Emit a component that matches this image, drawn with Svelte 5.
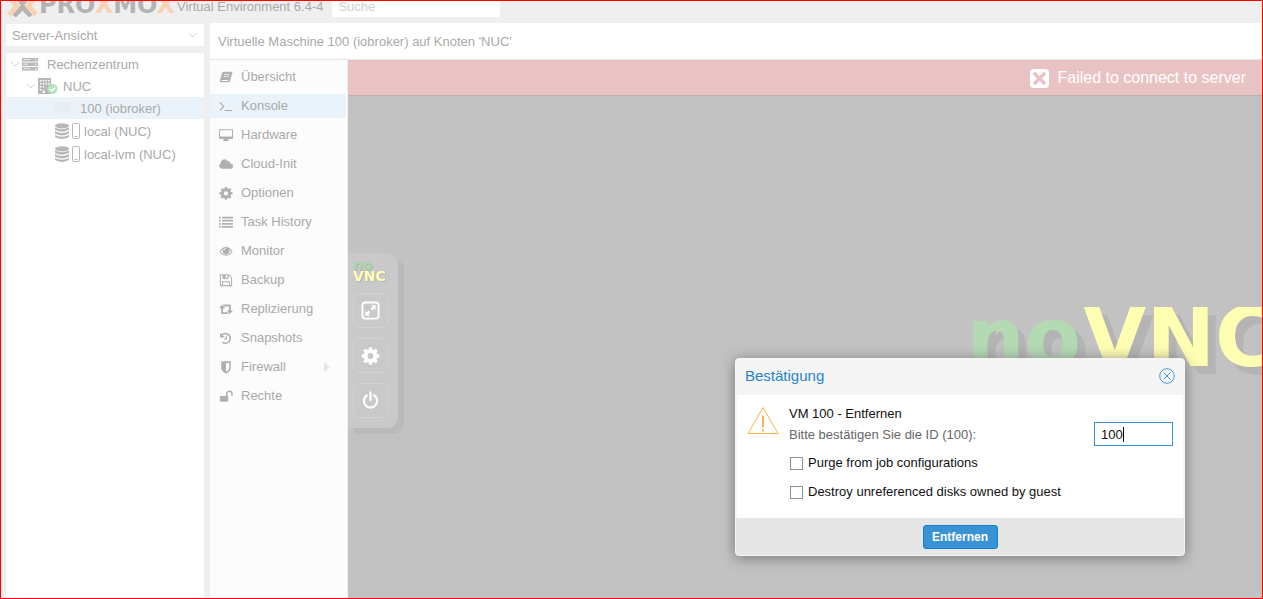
<script lang="ts">
  type TreeNode = {
    label: string;
    kind: 'datacenter' | 'node' | 'vm' | 'storage';
    level: number;
    open?: boolean;
    selected?: boolean;
  };

  const tree: TreeNode[] = [
    { label: 'Rechenzentrum', kind: 'datacenter', level: 0, open: true },
    { label: 'NUC', kind: 'node', level: 1, open: true },
    { label: '100 (iobroker)', kind: 'vm', level: 2, selected: true },
    { label: 'local (NUC)', kind: 'storage', level: 2 },
    { label: 'local-lvm (NUC)', kind: 'storage', level: 2 },
  ];

  const menu = [
    { label: 'Übersicht', icon: 'book' },
    { label: 'Konsole', icon: 'terminal' },
    { label: 'Hardware', icon: 'desktop' },
    { label: 'Cloud-Init', icon: 'cloud' },
    { label: 'Optionen', icon: 'gear' },
    { label: 'Task History', icon: 'list' },
    { label: 'Monitor', icon: 'eye' },
    { label: 'Backup', icon: 'floppy' },
    { label: 'Replizierung', icon: 'retweet' },
    { label: 'Snapshots', icon: 'history' },
    { label: 'Firewall', icon: 'shield', more: true },
    { label: 'Rechte', icon: 'unlock' },
  ];

  let active = $state('Konsole');
  let view = $state('server');
  let search = $state('');
  let confirmId = $state('100');
  let purge = $state(false);
  let destroy = $state(false);
  let open = $state(true);
</script>

{#snippet gear()}
  <path
    fill-rule="evenodd"
    d="M6.8 1h2.4l.4 1.9 1.2.5 1.6-1.1 1.7 1.7L13 5.6l.5 1.2 1.9.4v2.4l-1.9.4-.5 1.2 1.1 1.6-1.7 1.7-1.6-1.1-1.2.5-.4 1.9H6.8l-.4-1.9-1.2-.5-1.6 1.1-1.7-1.7L3 11.200l-.5-1.200-1.900-.4V7.200l1.900-.4.5-1.200L1.900 4l1.700-1.700 1.600 1.100 1.200-.5zM8 5.900a2.500 2.500 0 1 0 0 5 2.500 2.500 0 0 0 0-5z"
  />
{/snippet}

{#snippet icon(name: string)}
  <svg class="icon" viewBox="0 0 16 16" aria-hidden="true">
    {#if name === 'book'}
      <path
        fill-rule="evenodd"
        d="M5 2h9.500q1.200.2.800 1.500l-2.800 9q-.4 1.500-2 1.500H2.500Q.7 13.800 1 12L3.600 3.500Q4 2 5 2zM6 4.500l-.3 1h6l.3-1zM5.300 7 5 8h6l.3-1zM3 11.500q-.4 1.200.5 1.200h6.700l.4-1.200z"
      />
    {:else if name === 'terminal'}
      <path d="M1 4l4.500 4.500L1 13" fill="none" stroke="currentColor" stroke-width="1.300" />
      <path d="M6.500 12.500h8.500v1.300H6.500z" />
    {:else if name === 'desktop'}
      <path
        fill-rule="evenodd"
        d="M1 1.500h14q1 0 1 1v9q0 1-1 1h-4.500l.6 1.500v.9H4.900V14l.6-1.500H1q-1 0-1-1v-9q0-1 1-1zM1.200 2.700v7.100h13.600V2.700z"
      />
    {:else if name === 'cloud'}
      <path d="M3.500 13.500A3.500 3.500 0 0 1 2 7a4.300 4.300 0 0 1 8-2.200A2.500 2.500 0 0 1 13 7.500a3 3 0 0 1 0 6z" />
    {:else if name === 'gear'}
      {@render gear()}
    {:else if name === 'list'}
      <path
        d="M0 2h2v2H0zM3.500 2H16v2H3.500zM0 5.500h2v2H0zM3.500 5.500H16v2H3.500zM0 9h2v2H0zM3.500 9H16v2H3.500zM0 12.500h2v2H0zM3.500 12.500H16v2H3.500z"
      />
    {:else if name === 'eye'}
      <path
        fill-rule="evenodd"
        d="M.5 8.500Q3.500 3.500 8 3.500t7.500 5q-3 5-7.500 5t-7.500-5zm1.300 0Q4.500 12.400 8 12.400t6.200-3.900Q13 6.700 11.200 5.500a4 4 0 1 1-6.400 0Q3 6.700 1.800 8.500z"
      />
      <path d="M8 5a2.600 2.600 0 0 0-2.600 2.600" fill="none" stroke="#fcfcfc" />
    {:else if name === 'floppy'}
      <path
        fill-rule="evenodd"
        d="M1 1.500h10.500l3.500 3.500v10H1zM2.200 2.700v11.100h1.300V9.500h9v4.300h1.300V5.500L11 2.700V6.500H4V2.700zM4.700 10.600v3.200h6.600v-3.200zM7.500 2.700v2.700h2V2.700z"
      />
    {:else if name === 'retweet'}
      <path d="M3.500 2.800 7 7H4.700v4.600h5l1.900 2.200H2.500V7H0zM12.500 13.800 9 9.600h2.300V5h-5L4.400 2.800h9.100v6.800H16z" />
    {:else if name === 'history'}
      <path d="M3.500 4.500A5.500 5.500 0 1 1 4 12.700" fill="none" stroke="currentColor" stroke-width="2" />
      <path d="M1.200 2v5.500h5.500z" />
      <path d="M8.500 5v4H6" fill="none" stroke="currentColor" stroke-width="1.300" />
    {:else if name === 'shield'}
      <path
        fill-rule="evenodd"
        d="M2.500 1.500h11V9q0 3.800-5.500 6.500Q2.500 12.800 2.500 9zM8 3.300v10.200Q11.800 11.300 11.800 9V3.300z"
      />
    {:else if name === 'unlock'}
      <path d="M1 8h9.500v6.500H1z" />
      <path d="M8.800 8V5.500a3 3 0 0 1 6 0V8" fill="none" stroke="currentColor" stroke-width="1.700" />
    {/if}
  </svg>
{/snippet}

<div class="page">
  <header class="topbar">
    <svg class="logo" viewBox="0 0 169 24" role="img" aria-label="Proxmox">
      <g fill="none" stroke-width="5">
        <path d="M7 1l8.500 9L24 1M7 23l8.500-9 8.500 9" stroke="#b3b3b3" />
        <path d="M2 4l8 9-8 9M29 4l-8 9 8 9" stroke="#f9d3b4" />
      </g>
      <text x="32" y="20">PRO<tspan>X</tspan>MO<tspan>X</tspan></text>
    </svg>
    <span class="version">Virtual Environment 6.4-4</span>
    <input class="search" type="text" placeholder="Suche" aria-label="Suche" bind:value={search} />
  </header>

  <div class="workspace">
    <aside class="sidebar">
      <div class="view-select">
        <select aria-label="Ansicht" bind:value={view}>
          <option value="server">Server-Ansicht</option>
        </select>
        <svg viewBox="0 0 10 6" aria-hidden="true"><path d="M1 1l4 4 4-4" /></svg>
      </div>
      <ul class="tree">
        {#each tree as node}
          <li class={['node', `level-${node.level}`, node.kind, node.selected && 'selected']}>
            {#if node.open}
              <svg class="expander" viewBox="0 0 10 6" aria-hidden="true"><path d="M1 1l4 4 4-4" /></svg>
            {/if}
            {#if node.kind === 'datacenter'}
              <svg class="glyph" viewBox="0 0 16 16" aria-hidden="true">
                <path
                  fill-rule="evenodd"
                  d="M0 2h16v3.500H0zM0 6.500h16V10H0zM0 11h16v3.500H0zM1.500 3.300v.8H8v-.8zM1.500 7.800v.8H6v-.8zM1.500 12.300v.8H8v-.8zM13 3.200v1h1.500v-1zM13 7.700v1h1.500v-1zM13 12.200v1h1.500v-1z"
                />
              </svg>
            {:else if node.kind === 'node'}
              <svg class="glyph wide" viewBox="0 0 20 16" aria-hidden="true">
                <path
                  fill-rule="evenodd"
                  d="M0 0h13v16H0zM2 2v1.500h1.500V2zm2.700 0v1.500h1.500V2zm2.700 0v1.500h1.500V2zm2.600 0v1.500h1.500V2zM2 5v1.500h1.500V5zm2.700 0v1.500h1.500V5zm2.700 0v1.500h1.500V5zm2.600 0v1.500h1.500V5zM2 8v1.500h1.500V8zm2.700 0v1.500h1.500V8zM2 11v1.500h1.500V11zm2.700 1.500V15h2v-2.500z"
                />
                <circle cx="14.500" cy="11" r="5" fill="#b3e6bd" />
                <path d="M12 11l2 2 3.200-3.500" fill="none" stroke="#fff" stroke-width="1.500" />
              </svg>
            {:else if node.kind === 'vm'}
              <svg class="glyph faint" viewBox="0 0 16 16" aria-hidden="true">
                <path d="M0 2h16v10h-5l1 2.500H4L5 12H0z" />
              </svg>
            {:else}
              <svg class="glyph storage-glyph" viewBox="0 0 25 16" aria-hidden="true">
                <ellipse cx="7" cy="2.800" rx="7" ry="2.600" />
                <path
                  d="M0 4.500q7 3.500 14 0v2.200q-7 4-14 0zM0 8.200q7 3.500 14 0v2.200q-7 4-14 0zM0 11.900q7 3.500 14 0v2q-7 4-14 0z"
                />
                <rect x="17.500" y=".5" width="7" height="15" rx="1" fill="none" stroke="currentColor" />
                <path d="M19.500 13h3v1h-3z" />
              </svg>
            {/if}
            <span>{node.label}</span>
          </li>
        {/each}
      </ul>
    </aside>

    <main class="content">
      <h1>Virtuelle Maschine 100 (iobroker) auf Knoten 'NUC'</h1>
      <div class="panes">
        <nav class="menu">
          {#each menu as item}
            <a
              href={`#${item.icon}`}
              class={{ active: item.label === active }}
              onclick={() => (active = item.label)}
            >
              {@render icon(item.icon)}
              <span>{item.label}</span>
              {#if item.more}
                <svg class="more" viewBox="0 0 6 10" aria-hidden="true"><path d="M0 0l6 5-6 5z" /></svg>
              {/if}
            </a>
          {/each}
        </nav>

        <section class="console">
          <div class="status">
            <svg viewBox="0 0 20 20" aria-hidden="true">
              <rect x="1" y="1" width="19" height="19" rx="4" fill="#fff" />
              <path d="M5 5l11 11M16 5L5 16" stroke="#e9c3c3" stroke-width="3.500" />
            </svg>
            <span>Failed to connect to server</span>
          </div>
          <div class="screen">
            <svg class="watermark" viewBox="0 0 289 70" aria-hidden="true">
              <text x="108" y="59" text-anchor="end" fill="#b3dab3">no</text>
              <text x="110" y="59" fill="#ffffb3">VNC</text>
            </svg>
            <div class="control-bar">
              <svg class="bar-logo" viewBox="0 0 35 22" role="img" aria-label="noVNC">
                <text x="0" y="9" fill="#a6d6a6">no</text>
                <text x="0" y="20" fill="#ffffb3">VNC</text>
              </svg>
              <button type="button" aria-label="Vollbild">
                <svg viewBox="0 0 20 20">
                  <rect x="1.500" y="1.500" width="17" height="17" rx="3" fill="none" stroke="#fff" stroke-width="2" />
                  <path d="M10.500 4.500h5v5l-1.600-1.600-2 2-1.800-1.800 2-2zM9.500 15.500h-5v-5l1.600 1.600 2-2 1.800 1.800-2 2z" />
                </svg>
              </button>
              <button type="button" aria-label="Einstellungen">
                <svg viewBox="0 0 16 16">{@render gear()}</svg>
              </button>
              <button type="button" aria-label="Ein/Aus">
                <svg viewBox="0 0 20 20">
                  <path
                    d="M6 4.700a7 7 0 1 0 8 0M10 1.500v8"
                    fill="none"
                    stroke="#fff"
                    stroke-width="2.400"
                    stroke-linecap="round"
                  />
                </svg>
              </button>
            </div>
          </div>
        </section>
      </div>
    </main>
  </div>

  {#if open}
    <div class="dialog" role="dialog" aria-labelledby="dialog-title">
      <div class="dialog-head">
        <h2 id="dialog-title">Bestätigung</h2>
        <button type="button" class="close" aria-label="Schließen" onclick={() => (open = false)}>
          <svg viewBox="0 0 16 16">
            <circle cx="8" cy="8" r="7.300" />
            <path d="M4.500 4.500l7 7M11.500 4.500l-7 7" />
          </svg>
        </button>
      </div>
      <form onsubmit={(e) => e.preventDefault()}>
        <div class="dialog-body">
          <svg class="warning" viewBox="0 0 32 29" aria-hidden="true">
            <path d="M16 1.500L31 27.500H1z" fill="none" stroke="#fbb34c" />
            <path d="M15 9.500h2v12h-2zM15 23.500h2v2h-2z" fill="#fbb34c" />
          </svg>
          <div class="fields">
            <p>VM 100 - Entfernen</p>
            <div class="confirm">
              <label for="confirm-id">Bitte bestätigen Sie die ID (100):</label>
              <div class="id-box">
                <input id="confirm-id" type="text" bind:value={confirmId} />
                <span class="caret"></span>
              </div>
            </div>
            <label class="check"><input type="checkbox" bind:checked={purge} />Purge from job configurations</label>
            <label class="check"
              ><input type="checkbox" bind:checked={destroy} />Destroy unreferenced disks owned by guest</label
            >
          </div>
        </div>
        <div class="dialog-foot">
          <button type="submit">Entfernen</button>
        </div>
      </form>
    </div>
  {/if}
</div>

<style>
  :global(body) {
    font-family: 'Liberation Sans', Arial, sans-serif;
    font-size: 13px;
    line-height: 16px;
    color: #a9a9a9;
  }

  .page {
    position: relative;
    display: flex;
    flex-direction: column;
    box-sizing: border-box;
    min-height: 100vh;
    border: 1px solid #f00;
    background: #efefef;
  }

  input,
  select,
  button {
    font: inherit;
    color: inherit;
    box-sizing: border-box;
  }

  .topbar {
    display: flex;
    align-items: flex-end;
    height: 16px;
    padding: 0 6px 6px;
    overflow: hidden;
  }

  .logo {
    flex: none;
    width: 169px;
    height: 24px;
  }

  .logo text {
    font: bold 24px 'DejaVu Sans', sans-serif;
    fill: #b3b3b3;
  }

  .logo tspan {
    fill: #f9d3b4;
  }

  .version {
    flex: none;
    padding: 0 9px 2px 1px;
  }

  .search {
    width: 168px;
    height: 24px;
    padding: 2px 6px 0;
    border: 0;
    background: #fff;
  }

  .search::placeholder {
    color: #d0d0d0;
  }

  .workspace {
    display: flex;
    flex: 1;
    gap: 6px;
    padding-left: 5px;
  }

  .sidebar {
    display: flex;
    flex-direction: column;
    flex: none;
    gap: 7px;
    width: 198px;
    padding-top: 1px;
  }

  .view-select {
    position: relative;
    background: #fff;
  }

  .view-select select {
    display: block;
    width: 100%;
    height: 22px;
    padding: 2px 6px 0;
    border: 0;
    background: none;
    appearance: none;
  }

  .view-select svg {
    position: absolute;
    top: 8px;
    right: 6px;
    width: 10px;
    height: 6px;
    pointer-events: none;
  }

  .view-select path,
  .expander path {
    fill: none;
    stroke: #d0d0d0;
  }

  .tree {
    flex: 1;
    margin: 0;
    padding: 0;
    list-style: none;
    background: #fff;
  }

  .node {
    display: flex;
    align-items: center;
    height: 22px;
  }

  .node span {
    padding-top: 2px;
  }

  .node.storage {
    height: 23px;
  }

  .level-0 {
    padding-left: 4px;
  }

  .level-1 {
    padding-left: 20px;
  }

  .level-2 {
    padding-left: 49px;
  }

  .node.selected {
    background: #ebf3fa;
  }

  .expander {
    width: 10px;
    height: 6px;
    margin-right: 2px;
  }

  .glyph {
    width: 16px;
    height: 16px;
    margin-right: 9px;
    fill: #b8b8b8;
    color: #b8b8b8;
  }

  .glyph.wide {
    width: 20px;
    margin-right: 5px;
  }

  .glyph.faint {
    fill: #e8eef4;
  }

  .glyph.storage-glyph {
    width: 25px;
    margin-right: 4px;
  }

  .content {
    display: flex;
    flex: 1;
    flex-direction: column;
    min-width: 0;
  }

  h1 {
    margin: 0;
    padding: 11px 8px 9px;
    border-bottom: 1px solid #e6e6e6;
    background: #fff;
    font-size: 13px;
    font-weight: normal;
  }

  .panes {
    display: flex;
    flex: 1;
  }

  .menu {
    display: flex;
    flex: none;
    flex-direction: column;
    gap: 5px;
    box-sizing: border-box;
    width: 138px;
    padding: 5px 1px 5px 0;
    border-right: 1px solid #f0f0f0;
    background: #fcfcfc;
  }

  .menu a {
    display: flex;
    align-items: center;
    height: 24px;
    padding: 0 16px 0 9px;
    color: inherit;
    text-decoration: none;
  }

  .menu a.active {
    background: #ebf3fa;
  }

  .icon {
    width: 14px;
    height: 14px;
    margin-right: 8px;
    fill: #b0b0b0;
    color: #b0b0b0;
  }

  .more {
    width: 6px;
    height: 10px;
    margin-left: auto;
    fill: #e6e6e6;
  }

  .console {
    display: flex;
    flex: 1;
    flex-direction: column;
    min-width: 0;
    background: #c2c2c2;
  }

  .status {
    display: flex;
    align-items: center;
    justify-content: flex-end;
    gap: 8px;
    height: 35px;
    padding-right: 16px;
    border-bottom: 1px solid #b9b0b0;
    background: #e9c3c3;
    color: #fff;
    font-size: 16px;
  }

  .status svg {
    width: 20px;
    height: 20px;
  }

  .screen {
    position: relative;
    display: flex;
    flex: 1;
    align-items: flex-start;
    overflow: hidden;
  }

  .watermark {
    position: absolute;
    top: 211px;
    right: 0;
    width: 289px;
    height: 70px;
    font: bold 82px 'DejaVu Sans', sans-serif;
    filter: drop-shadow(8px 8px 0 #b4b4b4);
  }

  .control-bar {
    display: flex;
    flex-direction: column;
    gap: 10px;
    margin-top: 157px;
    padding: 8px 10px 10px 5px;
    border-radius: 0 10px 10px 0;
    background: #c9c9c9;
    box-shadow: 6px 6px 0 #bababa;
  }

  .bar-logo {
    width: 35px;
    height: 22px;
    font: bold 14px 'DejaVu Sans', sans-serif;
    filter: drop-shadow(1px 1px 0 #b4b4b4);
  }

  .control-bar button {
    display: grid;
    place-items: center;
    width: 35px;
    height: 35px;
    padding: 0;
    border: 1px solid #d2d2d2;
    border-radius: 6px;
    background: none;
  }

  .control-bar button svg {
    width: 19px;
    height: 19px;
    fill: #fff;
  }

  .dialog {
    position: absolute;
    top: 357px;
    left: 734px;
    box-sizing: border-box;
    width: 450px;
    border: 1px solid #f5f5f5;
    border-radius: 4px;
    background: #f5f5f5;
    box-shadow: 0 2px 14px #777;
    color: #111;
    overflow: hidden;
  }

  .dialog-head {
    display: flex;
    align-items: center;
    justify-content: space-between;
    height: 34px;
    padding: 0 9px 2px;
  }

  h2 {
    margin: 0;
    color: #2584cb;
    font-size: 15px;
    font-weight: normal;
  }

  .close {
    display: block;
    padding: 0;
    border: 0;
    background: none;
  }

  .close svg {
    display: block;
    width: 16px;
    height: 16px;
    fill: none;
    stroke: #4a97cf;
  }

  .dialog-body {
    display: flex;
    align-items: flex-start;
    gap: 10px;
    margin: 0 1px;
    padding: 11px 10px 14px;
    background: #fff;
  }

  .warning {
    flex: none;
    width: 32px;
    height: 29px;
  }

  .fields {
    display: flex;
    flex: 1;
    flex-direction: column;
  }

  .fields p {
    margin: 0;
  }

  .confirm {
    display: flex;
    align-items: center;
    justify-content: space-between;
    color: #666;
  }

  .confirm label {
    padding-top: 2px;
  }

  .id-box {
    position: relative;
    color: #111;
  }

  .id-box input {
    display: block;
    width: 79px;
    height: 24px;
    padding: 0 6px;
    border: 1px solid #3892d4;
    outline: 0;
    background: #fff;
  }

  .caret {
    position: absolute;
    top: 5px;
    left: 29px;
    width: 1px;
    height: 15px;
    background: #000;
  }

  .check {
    display: flex;
    align-items: center;
    gap: 5px;
    height: 24px;
    margin-top: 5px;
  }

  .check input {
    width: 13px;
    height: 13px;
    margin: 0 0 0 1px;
    border: 1px solid #919191;
    background: #fff;
    appearance: none;
  }

  .check input:checked {
    background: #3892d4;
  }

  .dialog-foot {
    display: flex;
    justify-content: center;
    padding: 7px 0 6px;
    background: #e6e6e6;
  }

  .dialog-foot button {
    width: 75px;
    height: 24px;
    padding: 0;
    border: 1px solid #157fcc;
    border-radius: 3px;
    background: #3892d4;
    color: #fff;
    font-size: 12px;
    font-weight: bold;
  }
</style>
